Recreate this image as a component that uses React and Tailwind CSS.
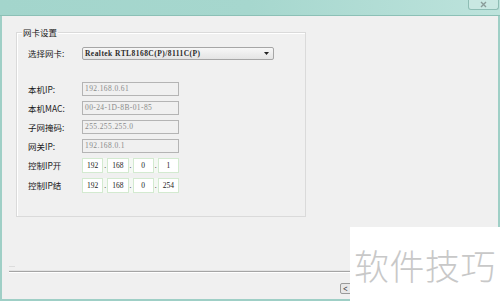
import React from 'react';

const cjk = { fontFamily: '"Noto Sans CJK SC", "Noto Sans", sans-serif' };
const latin = { fontFamily: '"Liberation Serif", "Noto Sans CJK SC", serif' };

const Field = ({ value }) => (
  <div className="h-[14px] w-[97px] border border-[#b4b4b4] bg-[#f0f0f0] flex items-center pl-[2px]">
    <span className="text-[7.5px] leading-none text-[#8a8a8a] tracking-[0.4px]" style={latin}>{value}</span>
  </div>
);

const IpField = ({ parts }) => (
  <div className="h-[15px] w-[97px] flex items-center bg-[#f4f8f3]">
    {parts.map((p, i) => (
      <React.Fragment key={i}>
        {i > 0 && <span className="w-[4px] text-center text-[7px] leading-none text-[#555]">.</span>}
        <div className="h-[15px] flex-1 border border-[#d3ead0] bg-white flex items-center justify-center">
          <span className="text-[7.5px] leading-none text-[#222]" style={latin}>{p}</span>
        </div>
      </React.Fragment>
    ))}
  </div>
);

const Row = ({ label, children }) => (
  <div className="flex items-center">
    <span className="w-[54px] text-[8.5px] leading-none text-[#1a1a1a]" style={cjk}>{label}</span>
    {children}
  </div>
);

export default function App() {
  return (
    <div className="relative w-[500px] h-[301px] overflow-hidden flex flex-col bg-[#f0f0f0]">
      {/* title bar */}
      <div className="h-[16px] shrink-0 flex justify-end bg-gradient-to-r from-[#a3d5cc] via-[#a6d7ce] to-[#bde3dc] border-b border-[#8cc0b6]">
        <div className="w-[31px] h-[10px] mr-[1px] border border-t-0 border-[#8ebdb4] rounded-b-[3px] bg-[#c9e8e2] flex items-center justify-center">
          <svg width="7" height="7" viewBox="0 0 7 7">
            <path d="M1 1 L6 6 M6 1 L1 6" stroke="#8a9c99" strokeWidth="1.4" />
          </svg>
        </div>
      </div>

      {/* window body */}
      <div className="flex-1 flex flex-col border-l-2 border-r-2 border-b-2 border-[#9fcfc6]">
        <div className="relative mt-[16px] ml-[14px] w-[290px] h-[185px] border border-[#dadada] shadow-[inset_1px_1px_0_#ffffff] pt-[14px] pl-[11px]">
          <span className="absolute left-[5px] -top-[6px] px-[1px] bg-[#f0f0f0] text-[8.5px] leading-[10px] text-[#1a1a1a]" style={cjk}>网卡设置</span>

          <Row label="选择网卡:">
            <div className="h-[13px] w-[192px] border border-[#a6a6a6] rounded-[2px] bg-gradient-to-b from-[#f7f7f7] to-[#e4e4e4] flex items-center justify-between pl-[2px] pr-[4px]">
              <span className="text-[7.5px] leading-none font-bold text-[#2a2a2a] tracking-[0.45px]" style={latin}>Realtek RTL8168C(P)/8111C(P)</span>
              <svg width="5" height="3" viewBox="0 0 5 3"><path d="M0 0 H5 L2.5 3 Z" fill="#222" /></svg>
            </div>
          </Row>

          <div className="mt-[22px] flex flex-col gap-[5px]">
            <Row label="本机IP:"><Field value="192.168.0.61" /></Row>
            <Row label="本机MAC:"><Field value="00-24-1D-8B-01-85" /></Row>
            <Row label="子网掩码:"><Field value="255.255.255.0" /></Row>
            <Row label="网关IP:"><Field value="192.168.0.1" /></Row>
            <Row label="控制IP开"><IpField parts={['192', '168', '0', '1']} /></Row>
            <Row label="控制IP结"><IpField parts={['192', '168', '0', '254']} /></Row>
          </div>
        </div>

        {/* separator */}
        <div className="mt-auto mb-[26px] ml-[7px] flex flex-col">
          <div className="h-[1px] w-[6px] bg-[#dcdcdc]" />
          <div className="mt-[3px] h-[1px] bg-[#e3e3e3]" />
          <div className="h-[1px] bg-[#a5a5a5]" />
          <div className="h-[1px] bg-white" />
        </div>
      </div>

      {/* partially hidden button */}
      <div className="absolute left-[340px] top-[283px] w-[40px] h-[11px] border border-[#9a9a9a] rounded-[2px] bg-[#e8e8e8] flex items-center pl-[2px]">
        <span className="text-[8px] leading-none text-[#333]">&lt;</span>
      </div>

      {/* watermark */}
      <div className="absolute right-0 bottom-0 w-[150px] h-[74px] bg-white flex items-center justify-center">
        <span className="text-[35px] leading-none text-[#c8c8c8] font-light tracking-[0.5px]" style={cjk}>软件技巧</span>
      </div>
    </div>
  );
}
